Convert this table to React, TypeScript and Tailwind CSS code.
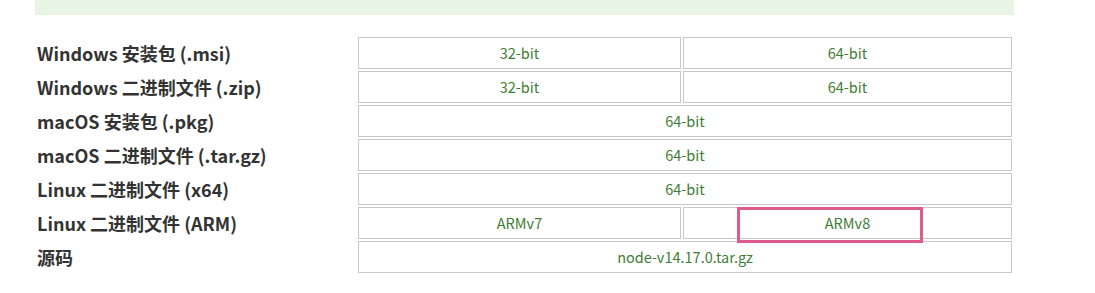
import React from "react";

type Row = { label: string; cells: string[] };

const rows: Row[] = [
  { label: "Windows 安装包 (.msi)", cells: ["32-bit", "64-bit"] },
  { label: "Windows 二进制文件 (.zip)", cells: ["32-bit", "64-bit"] },
  { label: "macOS 安装包 (.pkg)", cells: ["64-bit"] },
  { label: "macOS 二进制文件 (.tar.gz)", cells: ["64-bit"] },
  { label: "Linux 二进制文件 (x64)", cells: ["64-bit"] },
  { label: "Linux 二进制文件 (ARM)", cells: ["ARMv7", "ARMv8"] },
  { label: "源码", cells: ["node-v14.17.0.tar.gz"] },
];

export default function App() {
  return (
    <div
      className="w-[1095px] h-[293px] bg-white overflow-hidden"
      style={{ fontFamily: '"Noto Sans CJK SC", "Noto Sans", sans-serif' }}
    >
      <div className="ml-[35px] w-[979px]">
        <div className="h-[15px] bg-[#e8f5e5]" />

        <div className="relative mt-[20px] p-[2px] grid grid-cols-[319px_323px_329px] auto-rows-[32px] gap-[2px]">
          {rows.map((row) => (
            <React.Fragment key={row.label}>
              <div className="flex items-center pb-[1px] text-[18px] font-bold text-[#333] leading-none">
                {row.label}
              </div>
              {row.cells.map((cell) => (
                <a
                  key={cell}
                  href="#"
                  className={`flex items-center justify-center border border-[#c8c8c8] text-[14.5px] text-[#3e7d34] ${
                    row.cells.length === 1 ? "col-span-2" : ""
                  }`}
                >
                  {cell}
                </a>
              ))}
            </React.Fragment>
          ))}

          <div className="absolute left-[702px] top-[172px] w-[186px] h-[36px] border-[3px] border-[#df5a8d]" />
        </div>
      </div>
    </div>
  );
}
